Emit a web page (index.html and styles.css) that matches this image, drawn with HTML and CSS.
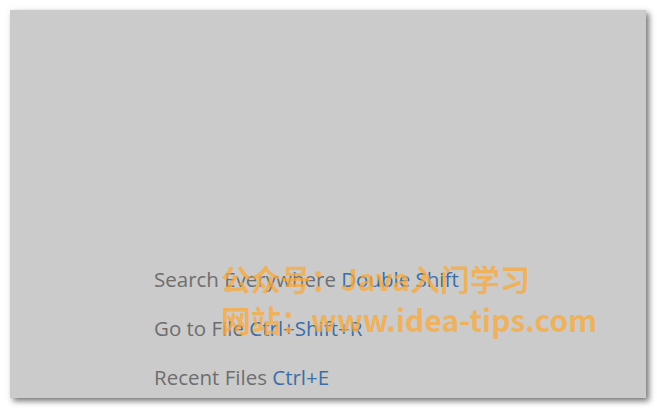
FILE: index.html
```html
<!DOCTYPE html>
<html lang="en">

<head>
    <meta charset="UTF-8">
    <title>Empty Editor</title>
    <link rel="stylesheet" href="styles.css">
</head>

<body>
    <!-- Empty editor area with hints -->
    <div class="editor">
        <ul class="hints">
            <li>Search Everywhere <span class="key">Double Shift</span></li>
            <li>Go to File <span class="key">Ctrl+Shift+R</span></li>
            <li>Recent Files <span class="key">Ctrl+E</span></li>
        </ul>

        <!-- Watermark -->
        <div class="watermark">
            <p>公众号：Java入门学习</p>
            <p>网站：www.idea-tips.com</p>
        </div>
    </div>
</body>

</html>
```

FILE: styles.css
```css
body {
    margin: 0;
    padding: 10px;
    background-color: #ffffff;
    font-family: "Open Sans", "Noto Sans", sans-serif;
}

.editor {
    position: relative;
    width: 636px;
    height: 388px;
    background-color: #cbcbcb;
    box-shadow: 3px 3px 6px rgba(0, 0, 0, 0.55);
}

.hints {
    list-style: none;
    margin: 0;
    padding: 245px 0 0 144px;
}

.hints li {
    font-size: 20.5px;
    line-height: 49px;
    color: #6e6e6e;
}

.key {
    color: #3b6ea6;
}

/* Watermark over the hints */
.watermark {
    position: absolute;
    left: 211px;
    top: 248px;
    color: rgba(250, 170, 60, 0.75);
    font-family: "Noto Sans CJK SC", "Noto Sans", sans-serif;
    font-weight: bold;
    font-size: 30px;
    line-height: 41px;
}

.watermark p {
    margin: 0;
}
```
